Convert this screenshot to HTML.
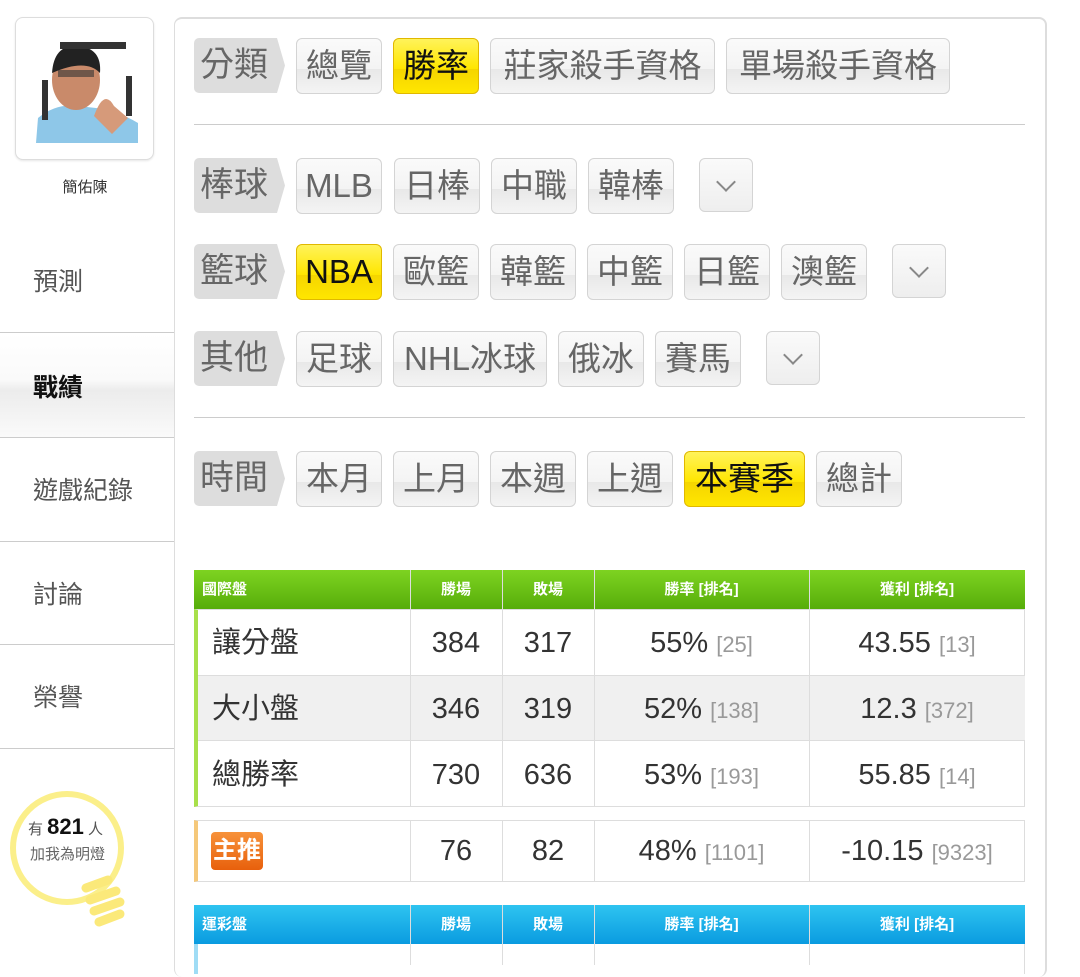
<!DOCTYPE html>
<html><head><meta charset="utf-8"><style>
*{margin:0;padding:0;box-sizing:border-box}
body{width:1080px;height:964px;background:#fff;position:relative;overflow:hidden;font-family:"Liberation Sans","Noto Sans CJK TC",sans-serif;color:#333}
.a{position:absolute}
.side{left:0;top:0;width:174px;height:964px}
.avatar{left:15px;top:17px;width:139px;height:143px;border:1px solid #ddd;border-radius:8px;background:#fff;box-shadow:0 1px 2px rgba(0,0,0,.1)}
.nav{left:0;width:174px;font-size:25px;color:#555;padding-left:33px}
.hl{left:0;width:174px;height:1px;background:#ccc}
.panel{left:174px;top:17px;width:873px;height:960px;border:2px solid #ddd;border-radius:8px;border-bottom:none;border-left:1px solid #ddd}
.tag{height:55px;width:91px;background:#ddd;border-radius:5px 0 0 5px;color:#666;font-size:34px;line-height:54px;padding-left:6px;clip-path:polygon(0 0,83px 0,91px 50%,83px 100%,0 100%)}
.b{height:56px;border:1px solid #d4d4d4;border-radius:6px;background:linear-gradient(#fafafa 0%,#f4f4f4 55%,#e8e8e8 56%,#f4f4f4 100%);font-size:33px;line-height:54px;text-align:center;color:#666}
.y{background:linear-gradient(#fff35a,#ffe600 55%,#f5d500 56%,#ffe600);border-color:#e0b800;color:#111}
.ch{width:54px;height:54px;border:1px solid #d4d4d4;border-radius:6px;background:linear-gradient(#fafafa,#eee)}
.ch:after{content:"";position:absolute;left:19px;top:16px;width:12px;height:12px;border-right:2px solid #888;border-bottom:2px solid #888;transform:rotate(45deg)}
.sep{left:194px;width:831px;height:1px;background:#ccc}
.th{font-size:15px;font-weight:bold;color:#fff;line-height:39px;text-align:center}
.td{font-size:29px;line-height:66px;text-align:center;color:#333}
.g{color:#999;font-size:22px}
.vl{width:1px;background:#ddd}
</style></head><body>
<div class="a side">
 <div class="a avatar"><svg width="139" height="143"><rect x="17" y="18" width="105" height="107" fill="#fff"/><path d="M20 125 L22 100 Q40 85 62 88 L80 90 Q100 92 122 105 L122 125Z" fill="#8ec7e8"/><ellipse cx="60" cy="62" rx="24" ry="30" fill="#c98a6a"/><path d="M36 55 Q38 26 62 28 Q86 30 84 55 Q70 40 36 55Z" fill="#222"/><rect x="42" y="52" width="36" height="7" fill="#333" opacity=".6"/><path d="M78 98 Q88 70 98 88 L112 100 L96 116Z" fill="#d69a7a"/><rect x="44" y="24" width="66" height="7" fill="#333"/><rect x="26" y="62" width="6" height="40" fill="#333"/><rect x="110" y="58" width="6" height="40" fill="#333"/></svg></div>
 <div class="a" style="left:0;width:170px;top:176px;text-align:center;font-size:15px;color:#333">簡佑陳</div>
 <div class="a nav" style="top:262px">預測</div>
 <div class="a" style="left:0;top:332px;width:174px;height:106px;background:linear-gradient(#fff 0%,#fafafa 45%,#ececec 55%,#fafafa 100%);border-top:1px solid #ccc;border-bottom:1px solid #ccc"></div>
 <div class="a nav" style="top:368px;font-weight:bold;color:#111">戰績</div>
 <div class="a nav" style="top:471px">遊戲紀錄</div>
 <div class="a hl" style="top:541px"></div>
 <div class="a nav" style="top:575px">討論</div>
 <div class="a hl" style="top:644px"></div>
 <div class="a nav" style="top:678px">榮譽</div>
 <div class="a hl" style="top:748px"></div>
 <svg class="a" style="left:0;top:780px" width="174" height="160"><circle cx="67" cy="68" r="54" fill="none" stroke="#fbef8a" stroke-width="6"/><g stroke="#fbe97a" stroke-width="9" stroke-linecap="round"><line x1="86" y1="108" x2="108" y2="100"/><line x1="90" y1="120" x2="116" y2="111"/><line x1="94" y1="131" x2="120" y2="122"/><line x1="99" y1="142" x2="120" y2="134"/></g></svg>
 <div class="a" style="left:28px;top:814px;font-size:15px;color:#555">有 <b style="font-size:22px;color:#111">821</b> 人</div>
 <div class="a" style="left:30px;top:843px;font-size:15px;color:#666">加我為明燈</div>
</div>
<div class="a panel"></div>
<div class="a tag" style="left:194px;top:38px">分類</div>
<div class="a b" style="left:296px;top:38px;width:86px">總覽</div>
<div class="a b y" style="left:393px;top:38px;width:86px">勝率</div>
<div class="a b" style="left:490px;top:38px;width:225px">莊家殺手資格</div>
<div class="a b" style="left:726px;top:38px;width:224px">單場殺手資格</div>
<div class="a sep" style="top:124px"></div>
<div class="a tag" style="left:194px;top:158px">棒球</div>
<div class="a b" style="left:296px;top:158px;width:86px">MLB</div>
<div class="a b" style="left:394px;top:158px;width:86px">日棒</div>
<div class="a b" style="left:491px;top:158px;width:86px">中職</div>
<div class="a b" style="left:588px;top:158px;width:86px">韓棒</div>
<div class="a ch" style="left:699px;top:158px"></div>
<div class="a tag" style="left:194px;top:244px">籃球</div>
<div class="a b y" style="left:296px;top:244px;width:86px">NBA</div>
<div class="a b" style="left:393px;top:244px;width:86px">歐籃</div>
<div class="a b" style="left:490px;top:244px;width:86px">韓籃</div>
<div class="a b" style="left:587px;top:244px;width:86px">中籃</div>
<div class="a b" style="left:684px;top:244px;width:86px">日籃</div>
<div class="a b" style="left:781px;top:244px;width:86px">澳籃</div>
<div class="a ch" style="left:892px;top:244px"></div>
<div class="a tag" style="left:194px;top:331px">其他</div>
<div class="a b" style="left:296px;top:331px;width:86px">足球</div>
<div class="a b" style="left:393px;top:331px;width:154px">NHL冰球</div>
<div class="a b" style="left:558px;top:331px;width:86px">俄冰</div>
<div class="a b" style="left:655px;top:331px;width:86px">賽馬</div>
<div class="a ch" style="left:766px;top:331px"></div>
<div class="a sep" style="top:417px"></div>
<div class="a tag" style="left:194px;top:451px">時間</div>
<div class="a b" style="left:296px;top:451px;width:86px">本月</div>
<div class="a b" style="left:393px;top:451px;width:86px">上月</div>
<div class="a b" style="left:490px;top:451px;width:86px">本週</div>
<div class="a b" style="left:587px;top:451px;width:86px">上週</div>
<div class="a b y" style="left:684px;top:451px;width:121px">本賽季</div>
<div class="a b" style="left:816px;top:451px;width:86px">總計</div>

<div class="a" style="left:194px;top:570px;width:831px;height:39px;background:linear-gradient(#7ed321,#56ad0a)"></div>
<div class="a" style="left:194px;top:609px;width:831px;height:198px;border:1px solid #ddd;border-left:4px solid #a8e04a"></div>
<div class="a" style="left:198px;top:675px;width:827px;height:66px;background:#f0f0f0;border-top:1px solid #ddd;border-bottom:1px solid #ddd"></div>
<div class="a th" style="left:198px;top:570px;text-align:left;padding-left:4px">國際盤</div>
<div class="a th" style="left:410px;top:570px;width:92px">勝場</div>
<div class="a th" style="left:502px;top:570px;width:92px">敗場</div>
<div class="a th" style="left:594px;top:570px;width:215px">勝率 [排名]</div>
<div class="a th" style="left:809px;top:570px;width:216px">獲利 [排名]</div>
<div class="a vl" style="left:410px;top:570px;height:237px"></div>
<div class="a vl" style="left:502px;top:570px;height:237px"></div>
<div class="a vl" style="left:594px;top:570px;height:237px"></div>
<div class="a vl" style="left:809px;top:570px;height:237px"></div>

<div class="a td" style="left:212px;top:610px;text-align:left">讓分盤</div>
<div class="a td" style="left:410px;top:610px;width:92px">384</div>
<div class="a td" style="left:502px;top:610px;width:92px">317</div>
<div class="a td" style="left:594px;top:610px;width:215px">55% <span class="g">[25]</span></div>
<div class="a td" style="left:809px;top:610px;width:216px">43.55 <span class="g">[13]</span></div>
<div class="a td" style="left:212px;top:676px;text-align:left">大小盤</div>
<div class="a td" style="left:410px;top:676px;width:92px">346</div>
<div class="a td" style="left:502px;top:676px;width:92px">319</div>
<div class="a td" style="left:594px;top:676px;width:215px">52% <span class="g">[138]</span></div>
<div class="a td" style="left:809px;top:676px;width:216px">12.3 <span class="g">[372]</span></div>
<div class="a td" style="left:212px;top:742px;text-align:left">總勝率</div>
<div class="a td" style="left:410px;top:742px;width:92px">730</div>
<div class="a td" style="left:502px;top:742px;width:92px">636</div>
<div class="a td" style="left:594px;top:742px;width:215px">53% <span class="g">[193]</span></div>
<div class="a td" style="left:809px;top:742px;width:216px">55.85 <span class="g">[14]</span></div>

<div class="a" style="left:194px;top:820px;width:831px;height:62px;border:1px solid #ddd;border-left:4px solid #f5c87a"></div>
<div class="a vl" style="left:410px;top:820px;height:62px"></div>
<div class="a vl" style="left:502px;top:820px;height:62px"></div>
<div class="a vl" style="left:594px;top:820px;height:62px"></div>
<div class="a vl" style="left:809px;top:820px;height:62px"></div>
<div class="a" style="left:211px;top:832px;width:52px;height:38px;border-radius:4px;background:linear-gradient(#f7923a,#e8600c);color:#fff;font-weight:bold;font-size:24px;line-height:38px;text-align:center">主推</div>
<div class="a td" style="left:410px;top:818px;width:92px">76</div>
<div class="a td" style="left:502px;top:818px;width:92px">82</div>
<div class="a td" style="left:594px;top:818px;width:215px">48% <span class="g">[1101]</span></div>
<div class="a td" style="left:809px;top:818px;width:216px">-10.15 <span class="g">[9323]</span></div>

<div class="a" style="left:194px;top:905px;width:831px;height:39px;background:linear-gradient(#2ec4f0,#0a9be0)"></div>
<div class="a" style="left:194px;top:944px;width:831px;height:30px;border-right:1px solid #ddd;border-left:4px solid #9fdcf5"></div>
<div class="a th" style="left:198px;top:905px;text-align:left;padding-left:4px">運彩盤</div>
<div class="a th" style="left:410px;top:905px;width:92px">勝場</div>
<div class="a th" style="left:502px;top:905px;width:92px">敗場</div>
<div class="a th" style="left:594px;top:905px;width:215px">勝率 [排名]</div>
<div class="a th" style="left:809px;top:905px;width:216px">獲利 [排名]</div>
<div class="a vl" style="left:410px;top:905px;height:60px"></div>
<div class="a vl" style="left:502px;top:905px;height:60px"></div>
<div class="a vl" style="left:594px;top:905px;height:60px"></div>
<div class="a vl" style="left:809px;top:905px;height:60px"></div>
</body></html>
